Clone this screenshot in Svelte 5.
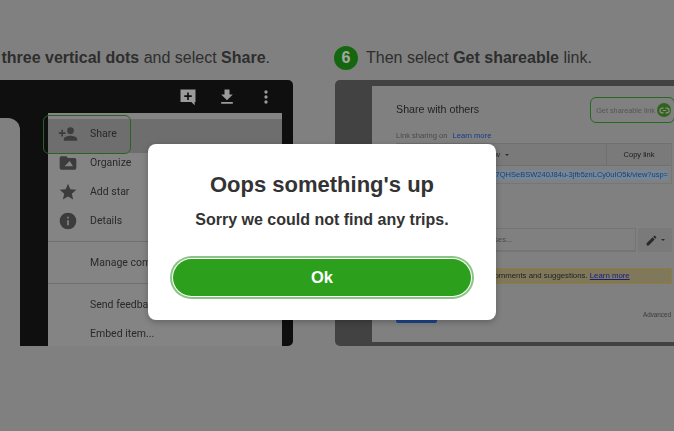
<script>
	const menuTop = [
		{ label: 'Share', icon: 'share', active: true },
		{ label: 'Organize', icon: 'folder' },
		{ label: 'Add star', icon: 'star' },
		{ label: 'Details', icon: 'info' }
	];
</script>

<div class="page">
	<div class="steps">
		<section class="step step-left">
			<h2 class="step-title title-right">three vertical dots <span class="thin">and select</span> Share<span class="thin">.</span></h2>
			<div class="shot shot-dark">
				<div class="toolbar">
					<svg width="20" height="20" viewBox="0 0 24 24"><path fill="#eee" d="M3 3h18v15h-1v4l-4-4H3zM11 6.500v3.500H7.500v2H11v3.500h2V12h3.500v-2H13V6.500z" fill-rule="evenodd"/></svg>
					<svg width="20" height="20" viewBox="0 0 24 24"><path fill="#eee" d="M19 9h-4V3H9v6H5l7 7zM5 18v2h14v-2z"/></svg>
					<svg width="20" height="20" viewBox="0 0 24 24"><path fill="#eee" d="M12 8a2 2 0 1 0 0-4 2 2 0 0 0 0 4zm0 2a2 2 0 1 0 0 4 2 2 0 0 0 0-4zm0 6a2 2 0 1 0 0 4 2 2 0 0 0 0-4z"/></svg>
				</div>
				<div class="shot-body">
					<div class="doc"></div>
					<div class="menu">
						<div class="menu-group">
							{#each menuTop as item}
								<div class="menu-row" class:active={item.active}>
									<span class="menu-icon">
										{#if item.icon === 'share'}
											<svg width="20" height="20" viewBox="0 0 24 24"><path d="M15 12a4 4 0 1 0 0-8 4 4 0 0 0 0 8zM6 10V7H4v3H1v2h3v3h2v-3h3v-2zm9 4c-2.700 0-8 1.300-8 4v2h16v-2c0-2.700-5.300-4-8-4z"/></svg>
										{:else if item.icon === 'folder'}
											<svg width="20" height="20" viewBox="0 0 24 24"><path fill-rule="evenodd" d="M10 4H4a2 2 0 0 0-2 2v12a2 2 0 0 0 2 2h16a2 2 0 0 0 2-2V8a2 2 0 0 0-2-2h-8zM14 9.500l4 6.500H8z"/><path fill="#cbcbcb" d="M14 11l2.500 4h-5z"/></svg>
										{:else if item.icon === 'star'}
											<svg width="20" height="20" viewBox="0 0 24 24"><path d="M12 17.300l6.200 3.700-1.600-7L22 9.200l-7.200-.6L12 2 9.200 8.600 2 9.200 7.500 14l-1.700 7z"/></svg>
										{:else}
											<svg width="20" height="20" viewBox="0 0 24 24"><path fill-rule="evenodd" d="M12 2a10 10 0 1 0 0 20 10 10 0 0 0 0-20zM11 7h2v2h-2zm0 4h2v6h-2z"/></svg>
										{/if}
									</span>
									<span>{item.label}</span>
								</div>
							{/each}
						</div>
						<div class="menu-group">
							<div class="menu-row"><span class="menu-icon"></span><span>Manage comments</span></div>
						</div>
						<div class="menu-group last">
							<div class="menu-row"><span class="menu-icon"></span><span>Send feedback</span></div>
							<div class="menu-row"><span class="menu-icon"></span><span>Embed item...</span></div>
						</div>
						<div class="share-ring"></div>
					</div>
				</div>
			</div>
		</section>

		<section class="step step-right">
			<h2 class="step-title"><span class="num">6</span><span><span class="thin">Then select</span> Get shareable <span class="thin">link.</span></span></h2>
			<div class="shot shot-grey">
				<div class="dialog">
					<div class="dialog-head">
						<span class="dialog-title">Share with others</span>
						<span class="get-link">
							Get shareable link
							<span class="link-dot">
								<svg width="11" height="11" viewBox="0 0 24 24"><path fill="none" stroke="#d8d8d8" stroke-width="2.600" d="M10 7H7a5 5 0 0 0 0 10h3M14 7h3a5 5 0 0 1 0 10h-3M8 12h8"/></svg>
							</span>
						</span>
					</div>
					<div class="link-state"><span>Link sharing on</span><a href="#learn">Learn more</a></div>
					<div class="link-table">
						<div class="link-row">
							<span class="who">Anyone with the link can view <i class="caret"></i></span>
							<span class="copy">Copy link</span>
						</div>
						<div class="url"><span>drive.google.com/file/d/17QHSeBSW240J84u-3jfb5znLCy0uIO5k/view?usp=</span></div>
					</div>
					<div class="invite">
						<div class="invite-input">Enter names or email addresses...</div>
						<div class="pencil">
							<svg width="13" height="13" viewBox="0 0 24 24"><path d="M3 17.200V21h3.800L17.800 10 14 6.200zM20.700 7a1 1 0 0 0 0-1.400l-2.300-2.300a1 1 0 0 0-1.400 0l-1.800 1.800 3.800 3.800z"/></svg>
							<i class="caret"></i>
						</div>
					</div>
					<div class="notice">Anyone can add comments and suggestions. <a href="#more">Learn more</a></div>
					<div class="dialog-foot">
						<span class="done"></span>
						<span class="advanced">Advanced</span>
					</div>
				</div>
			</div>
		</section>
	</div>

	<div class="overlay">
		<div class="modal">
			<h1>Oops something's up</h1>
			<p>Sorry we could not find any trips.</p>
			<button type="button">Ok</button>
		</div>
	</div>
</div>

<style>
	:global(body) {
		margin: 0;
		background: #c5c5c5;
	}

	.page {
		position: relative;
		width: 674px;
		height: 431px;
		overflow: hidden;
		background: #c5c5c5;
		font-family: "Liberation Sans", Arial, sans-serif;
		color: #484848;
	}

	.steps {
		display: grid;
		grid-template-columns: 293px 340px;
		column-gap: 41px;
		padding-top: 45px;
	}

	.step {
		min-width: 0;
	}

	.step-title {
		display: flex;
		align-items: center;
		gap: 8px;
		height: 25px;
		margin: 0 0 10px;
		font-size: 16px;
		line-height: 25px;
		font-weight: 700;
		white-space: pre;
	}

	.title-right {
		display: block;
		padding-right: 23px;
		text-align: right;
	}

	.thin {
		font-weight: 400;
	}

	.num {
		width: 24px;
		height: 24px;
		border-radius: 50%;
		background: #1f9f16;
		color: #fff;
		font-size: 16px;
		font-weight: 700;
		line-height: 24px;
		text-align: center;
	}

	.shot {
		height: 266px;
		overflow: hidden;
		filter: blur(0.3px);
	}

	.shot-dark {
		display: flex;
		flex-direction: column;
		background: #171717;
		border-radius: 0 5px 5px 0;
	}

	.toolbar {
		display: flex;
		flex-shrink: 0;
		justify-content: flex-end;
		gap: 19px;
		height: 33px;
		padding: 7px 17px 0 0;
		box-sizing: border-box;
	}

	.shot-body {
		display: flex;
		flex: 1;
		min-height: 0;
		padding-right: 11px;
	}

	.doc {
		width: 20px;
		margin-top: 5px;
		margin-right: 28px;
		background: #c5c5c5;
		border-radius: 0 12px 0 0;
	}

	.menu {
		position: relative;
		flex: 1;
		padding-top: 6px;
		background: #cbcbcb;
		color: #404040;
		font-family: Roboto, "Liberation Sans", sans-serif;
		font-size: 10.500px;
	}

	.menu-group {
		padding-bottom: 6px;
		margin-bottom: 6px;
		border-bottom: 1px solid #acacac;
	}

	.menu-group.last {
		border-bottom: 0;
	}

	.menu-row {
		display: flex;
		align-items: center;
		height: 29px;
	}

	.menu-row.active {
		background: #a9a9a9;
		box-shadow: 0 5px 0 #a9a9a9;
	}

	.menu-icon {
		display: flex;
		justify-content: center;
		width: 42px;
		padding-right: 3px;
		box-sizing: border-box;
	}

	.menu-icon svg {
		fill: #5c5c5c;
	}

	.share-ring {
		position: absolute;
		left: -5px;
		top: 2px;
		width: 86px;
		height: 37px;
		border: 1.500px solid #3f9a3a;
		border-radius: 6px;
	}

	.shot-grey {
		margin-left: 1px;
		padding: 6px 0 4px 37px;
		box-sizing: border-box;
		background: #666;
		border-radius: 5px 0 0 5px;
	}

	.dialog {
		display: flex;
		flex-direction: column;
		height: 100%;
		padding: 0 2px 0 24px;
		box-sizing: border-box;
		background: #c5c5c5;
		color: #3c3c3c;
		font-size: 8px;
	}

	.dialog-head {
		display: flex;
		flex-shrink: 0;
		align-items: center;
		justify-content: space-between;
		height: 26px;
		margin-top: 11px;
	}

	.dialog-title {
		padding-bottom: 2px;
		font-size: 10.700px;
		color: #343434;
	}

	.get-link {
		display: flex;
		align-items: center;
		gap: 2px;
		height: 26px;
		margin-right: -3px;
		padding: 0 3px 0 5px;
		box-sizing: border-box;
		border: 1px solid #3aa032;
		border-radius: 6px;
		color: #838383;
		font-size: 7.300px;
	}

	.link-dot {
		display: flex;
		align-items: center;
		justify-content: center;
		width: 14px;
		height: 14px;
		border-radius: 50%;
		background: #4a9a28;
	}

	.link-state {
		display: flex;
		gap: 5px;
		margin-top: 7px;
		color: #727272;
		font-size: 7.600px;
		line-height: 11px;
	}

	.link-state a {
		color: #1f5fd0;
		text-decoration: none;
	}

	.link-table {
		margin-top: 2px;
		border: 1px solid #b6b6b6;
		border-top-color: #acacac;
	}

	.link-row {
		display: flex;
		height: 21px;
		line-height: 21px;
		background: #bcbcbc;
		border-bottom: 1px solid #acacac;
	}

	.who {
		flex: 1;
		font-size: 7.900px;
	}

	.copy {
		width: 64px;
		border-left: 1px solid #acacac;
		font-size: 7.500px;
		color: #2c2c2c;
		text-align: center;
	}

	.caret {
		display: inline-block;
		width: 0;
		height: 0;
		margin-left: 3px;
		vertical-align: middle;
		border: 2px solid transparent;
		border-top: 2.500px solid #444;
		border-bottom: 0;
	}

	.url {
		display: flex;
		justify-content: flex-end;
		height: 17px;
		padding-right: 3px;
		line-height: 17px;
		font-size: 7.500px;
		white-space: nowrap;
		overflow: hidden;
	}

	.url span {
		align-self: center;
		line-height: 10px;
		background: #b0d0ee;
		color: #3f5f90;
	}

	.invite {
		display: flex;
		flex-shrink: 0;
		gap: 2px;
		height: 24px;
		margin-top: 44px;
	}

	.invite-input {
		flex: 1;
		padding-left: 1px;
		line-height: 22px;
		border: 1px solid #b4b4b4;
		border-bottom-width: 2px;
		box-sizing: border-box;
		font-size: 7.500px;
		color: #727272;
	}

	.pencil {
		display: flex;
		align-items: center;
		justify-content: center;
		width: 34px;
		background: #bcbcbc;
		border-radius: 2px;
	}

	.pencil svg {
		fill: #404040;
	}

	.notice {
		flex-shrink: 0;
		height: 16px;
		margin-top: 16px;
		padding-left: 35px;
		line-height: 14px;
		box-sizing: border-box;
		background: #c5b98a;
		border: 1px solid #d4c062;
		font-size: 7.800px;
		color: #343434;
		white-space: nowrap;
		overflow: hidden;
	}

	.notice a {
		color: #2a2ad0;
	}

	.dialog-foot {
		display: flex;
		flex-shrink: 0;
		align-items: flex-end;
		justify-content: space-between;
		margin-top: 25px;
		padding-right: 1px;
	}

	.done {
		width: 41px;
		height: 14px;
		background: #2a6ad8;
		border-radius: 2px;
	}

	.advanced {
		padding-bottom: 5px;
		font-size: 6.300px;
		color: #5a5a5a;
	}

	.overlay {
		position: absolute;
		inset: 0;
		padding: 144px 0 0 148px;
		box-sizing: border-box;
		background: rgba(0, 0, 0, 0.35);
	}

	.modal {
		width: 348px;
		height: 176px;
		padding-top: 28px;
		box-sizing: border-box;
		background: #fff;
		border-radius: 8px;
		box-shadow: 0 2px 6px rgba(0, 0, 0, 0.25);
		text-align: center;
		color: #333;
	}

	.modal h1 {
		margin: 0;
		font-size: 22px;
		line-height: 26px;
		font-weight: 700;
	}

	.modal p {
		margin: 12px 0 0;
		font-size: 16px;
		line-height: 20px;
		font-weight: 700;
	}

	.modal button {
		display: block;
		width: 298px;
		height: 37px;
		margin: 29px auto 0;
		padding: 0;
		border: 0;
		border-radius: 19px;
		background: #2ca01c;
		box-shadow: 0 0 0 1px #fff, 0 0 0 3px #8cc487;
		color: #fff;
		font-family: inherit;
		font-size: 16.500px;
		font-weight: 700;
	}
</style>
